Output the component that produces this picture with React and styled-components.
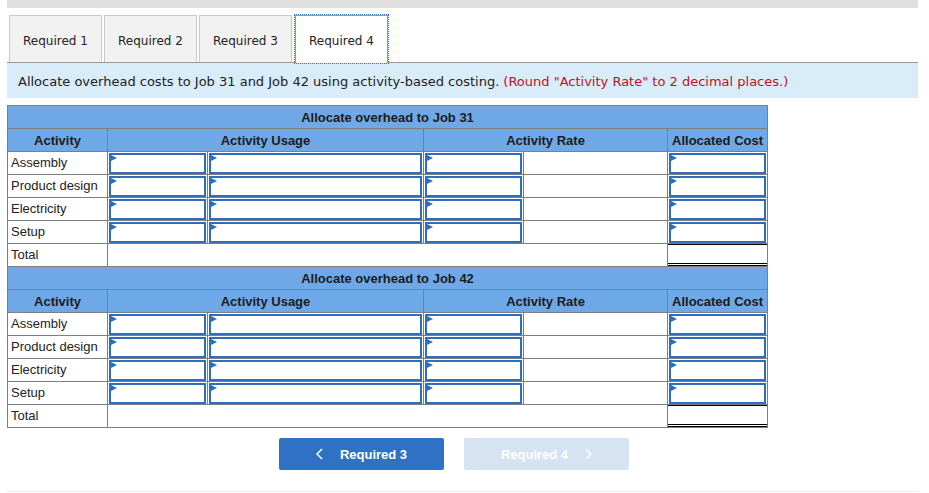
import React from "react";
import styled, { createGlobalStyle } from "styled-components";

const GlobalStyle = createGlobalStyle`
  body {
    margin: 0;
    background: #ffffff;
  }
`;

const Page = styled.div`
  width: 911px;
  margin-left: 7px;
  height: 492px;
  border-bottom: 1px solid #ededed;
  box-sizing: border-box;
`;

const TopBar = styled.div`
  height: 8px;
  background: #e0e0e0;
`;

const TabRow = styled.div`
  display: flex;
  gap: 2px;
  padding: 7px 0 0 2px;
  border-bottom: 1px solid #9a9a9a;
`;

const Tab = styled.div`
  width: 93px;
  height: 47px;
  box-sizing: border-box;
  padding-top: 3px;
  display: flex;
  align-items: center;
  justify-content: center;
  font-family: "DejaVu Sans", Verdana, sans-serif;
  font-size: 12px;
  color: #222;
  border: 1px solid #c9c9c9;
  border-bottom: none;
  background: ${({ $active }) => ($active ? "#ffffff" : "#f2f2f2")};
  ${({ $active }) =>
    $active &&
    `
    margin-left: 1px;
    margin-bottom: -1px;
    height: 48px;
    padding-top: 2px;
    border-color: #9a9a9a;
    outline: 1px dotted #2d6cd0;
    outline-offset: 0;
  `}
`;

const Instruction = styled.div`
  height: 35px;
  box-sizing: border-box;
  background: #d9ecf9;
  padding: 1px 0 0 11px;
  display: flex;
  align-items: center;
  font-family: "DejaVu Sans", Verdana, sans-serif;
  font-size: 13px;
  color: #222;
`;

const Note = styled.span`
  color: #c3101e;
  margin-left: 4px;
`;

const Table = styled.table`
  margin-top: 7px;
  border-collapse: collapse;
  table-layout: fixed;
  width: 761px;
  font-family: "Liberation Sans", Arial, sans-serif;
  font-size: 13px;
  color: #222;
`;

const Title = styled.th`
  background: #6fa8e7;
  border: 1px solid #7f7f7f;
  height: 22px;
  padding: 0;
  font-weight: bold;
  text-align: center;
  color: #1c1c1c;
`;

const Head = styled.th`
  background: #6fa8e7;
  border: 1px solid #7f7f7f;
  height: 22px;
  padding: 0;
  font-weight: bold;
  text-align: center;
  color: #1c1c1c;
`;

const Cell = styled.td`
  border: 1px solid #7f7f7f;
  height: 22px;
  padding: ${({ $input }) => ($input ? "1px 1px 0" : "0 3px")};
  box-sizing: border-box;
  vertical-align: top;
  line-height: 22px;
  white-space: nowrap;
`;

const TotalCell = styled.td`
  border: 1px solid #7f7f7f;
  height: 22px;
  padding: 0;
  vertical-align: top;
`;

const TotalBox = styled.div`
  height: 22px;
  box-sizing: border-box;
  border-top: 1px solid #000;
  border-bottom: 3px double #000;
`;

const Field = styled.div`
  position: relative;
  height: 21px;
  box-sizing: border-box;
  border: 2px solid #2f6dbf;
  background: #fff;
  &::before {
    content: "";
    position: absolute;
    left: 0;
    top: 0;
    border-left: 6px solid #2f6dbf;
    border-top: 3px solid transparent;
    border-bottom: 3px solid transparent;
  }
`;

const ButtonRow = styled.div`
  display: flex;
  gap: 20px;
  margin-top: 10px;
  padding-left: 272px;
`;

const NavButton = styled.button`
  width: 165px;
  height: 32px;
  border: none;
  border-radius: 2px;
  display: flex;
  align-items: center;
  justify-content: center;
  gap: 17px;
  font-family: "Liberation Sans", Arial, sans-serif;
  font-size: 13px;
  font-weight: bold;
  color: #fff;
  background: ${({ $disabled }) => ($disabled ? "#d5e3f3" : "#2f72c4")};
  cursor: ${({ $disabled }) => ($disabled ? "default" : "pointer")};
  padding: 0;
`;

const Chevron = ({ dir }) => (
  <svg width="7" height="12" viewBox="0 0 7 12">
    <polyline
      points={dir === "left" ? "6,1 1,6 6,11" : "1,1 6,6 1,11"}
      fill="none"
      stroke="#fff"
      strokeWidth="1.5"
    />
  </svg>
);

const activities = ["Assembly", "Product design", "Electricity", "Setup"];

const JobSection = ({ job }) => (
  <>
    <tr>
      <Title colSpan={6}>Allocate overhead to Job {job}</Title>
    </tr>
    <tr>
      <Head>Activity</Head>
      <Head colSpan={2}>Activity Usage</Head>
      <Head colSpan={2}>Activity Rate</Head>
      <Head>Allocated Cost</Head>
    </tr>
    {activities.map((a) => (
      <tr key={a}>
        <Cell>{a}</Cell>
        <Cell $input>
          <Field />
        </Cell>
        <Cell $input>
          <Field />
        </Cell>
        <Cell $input>
          <Field />
        </Cell>
        <Cell />
        <Cell $input>
          <Field />
        </Cell>
      </tr>
    ))}
    <tr>
      <Cell>Total</Cell>
      <Cell colSpan={4} />
      <TotalCell>
        <TotalBox />
      </TotalCell>
    </tr>
  </>
);

export default function App() {
  return (
    <>
      <GlobalStyle />
      <Page>
        <TopBar />
        <TabRow>
          <Tab>Required 1</Tab>
          <Tab>Required 2</Tab>
          <Tab>Required 3</Tab>
          <Tab $active>Required 4</Tab>
        </TabRow>
        <Instruction>
          Allocate overhead costs to Job 31 and Job 42 using activity-based costing.
          <Note>(Round "Activity Rate" to 2 decimal places.)</Note>
        </Instruction>
        <Table>
          <colgroup>
            <col style={{ width: 100 }} />
            <col style={{ width: 100 }} />
            <col style={{ width: 216 }} />
            <col style={{ width: 100 }} />
            <col style={{ width: 144 }} />
            <col style={{ width: 100 }} />
          </colgroup>
          <tbody>
            <JobSection job={31} />
            <JobSection job={42} />
          </tbody>
        </Table>
        <ButtonRow>
          <NavButton>
            <Chevron dir="left" />
            Required 3
          </NavButton>
          <NavButton $disabled>
            Required 4
            <Chevron dir="right" />
          </NavButton>
        </ButtonRow>
      </Page>
    </>
  );
}
